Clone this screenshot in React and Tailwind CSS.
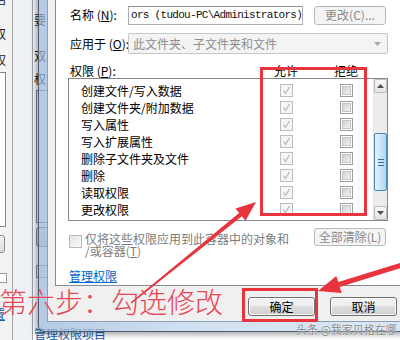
import React from "react";

const rows = [
  "创建文件/写入数据",
  "创建文件夹/附加数据",
  "写入属性",
  "写入扩展属性",
  "删除子文件夹及文件",
  "删除",
  "读取权限",
  "更改权限",
  "取得所有权",
];

function CheckedBox() {
  return (
    <div className="w-[13px] h-[13px] shrink-0 border border-[#bdbdbd] bg-[#f6f6f6] flex items-center justify-center">
      <svg width="11" height="11" viewBox="0 0 11 11">
        <path d="M2.5 5.5 L4.5 8.5 L8.5 2" fill="none" stroke="#b4b4b4" strokeWidth="1.2" />
      </svg>
    </div>
  );
}

function EmptyBox() {
  return (
    <div className="w-[13px] h-[13px] shrink-0 border border-[#9d9d9d] bg-white p-[1px]">
      <div className="w-full h-full border border-[#c4c4c4] bg-[linear-gradient(135deg,#d2d2d2,#f2f2f2)]" />
    </div>
  );
}

function WinButton({ children, disabled, className = "" }) {
  if (disabled) {
    return (
      <div
        className={`flex items-center justify-center border border-[#b5b9bd] rounded-[3px] bg-[#f4f4f4] text-[#8a8a8a] leading-none ${className}`}
      >
        {children}
      </div>
    );
  }
  return (
    <div
      className={`flex items-center justify-center border border-[#707070] rounded-[3px] bg-[linear-gradient(#f3f3f3,#ececec_50%,#dedede_50%,#d0d0d0)] shadow-[inset_0_0_0_1px_rgba(255,255,255,0.8)] text-black leading-none ${className}`}
    >
      {children}
    </div>
  );
}

function ScrollBar() {
  return (
    <div className="w-[14px] shrink-0 flex flex-col bg-[#ececec] border-l border-[#e2e2e2]">
      <div className="h-[14px] border border-[#bdbdbd] rounded-[2px] bg-[linear-gradient(#f7f7f7,#e4e4e4)] flex items-center justify-center">
        <svg width="7" height="4" viewBox="0 0 7 4">
          <path d="M0 4 L3.5 0 L7 4 Z" fill="#4d4d4d" />
        </svg>
      </div>
      <div className="flex-1 flex flex-col pt-[40px]">
        <div className="h-[58px] border border-[#4a87b8] rounded-[2px] bg-[linear-gradient(to_right,#e4f3fb,#c9e5f6_50%,#b0d6ef)] flex flex-col items-center justify-center gap-[2px]">
          <div className="w-[6px] h-[1px] bg-[#3f6f98]" />
          <div className="w-[6px] h-[1px] bg-[#3f6f98]" />
          <div className="w-[6px] h-[1px] bg-[#3f6f98]" />
        </div>
      </div>
      <div className="h-[14px] border border-[#bdbdbd] rounded-[2px] bg-[linear-gradient(#f7f7f7,#e4e4e4)] flex items-center justify-center">
        <svg width="7" height="4" viewBox="0 0 7 4">
          <path d="M0 0 L3.5 4 L7 0 Z" fill="#4d4d4d" />
        </svg>
      </div>
    </div>
  );
}

export default function App() {
  return (
    <div className="relative w-[400px] h-[340px] overflow-hidden bg-white font-['Noto_Sans_CJK_SC','Noto_Sans',sans-serif] text-[12px] text-black">
      {/* Background window A (far left) */}
      <div className="absolute left-[-60px] top-0 w-[73px] h-[340px] bg-[#f3f3f3] border-r border-[#a5a5a5] overflow-hidden flex flex-col">
        <span className="ml-[54px] mt-[-7px] leading-[12px] text-[#222]">话</span>
        <span className="ml-[54px] mt-[23px] leading-[12px] text-[#222]">双</span>
        <span className="ml-[54px] mt-[14px] leading-[12px] text-[#222]">权</span>
        <div className="ml-[10px] mt-[6px] w-[56px] h-[155px] bg-white border border-[#828790]" />
        <div className="ml-[10px] mt-[8px] w-[55px] h-[18px] border border-[#8a8a8a] rounded-[3px] bg-[linear-gradient(#f3f3f3,#dcdcdc)]" />
        <div className="ml-[57px] mt-[20px] w-[10px] h-[10px] border border-[#9a9a9a] bg-white" />
        <span className="ml-[53px] mt-[25px] leading-[12px] text-[#1a5fb4] underline">置</span>
      </div>

      {/* Background window B */}
      <div className="absolute left-[13px] top-0 w-[400px] h-[340px] flex bg-[#eef2f6]">
        <div className="w-[19px] shrink-0" />
        <div className="flex-1 bg-white border-l border-[#9aa1ab] flex flex-col pl-[1px]">
          <span className="mt-[14px] leading-[12px] text-[#222]">要</span>
          <span className="mt-[24px] leading-[12px] text-[#222]">双</span>
          <span className="mt-[11px] leading-[12px] text-[#222]">权</span>
          <div className="mt-[5px] ml-[2px] w-[60px] h-[133px] border border-[#828790] bg-white" />
          <div className="mt-[4px] ml-[2px] w-[60px] h-[20px] border border-[#8a8a8a] rounded-[3px] bg-[linear-gradient(#f3f3f3,#dcdcdc)]" />
          <div className="mt-[18px] ml-[2px] w-[13px] h-[13px] border border-[#9a9a9a] bg-[#f4f4f4]" />
          <span className="mt-[50px] leading-[12px] text-[#1a5fb4] underline whitespace-nowrap">管理权限项目</span>
        </div>
      </div>

      {/* Main dialog */}
      <div className="absolute left-[38px] top-[-20px] w-[380px] h-[352px] flex flex-col pl-[8px] pb-[9px] border-l border-b border-[#4a5d75] rounded-bl-[6px] bg-[linear-gradient(to_right,rgba(150,180,215,0.7),rgba(200,218,238,0.82)_40%,rgba(214,228,242,0.9))] shadow-[-2px_2px_6px_rgba(0,0,0,0.4)]">
        <div className="flex-1 flex flex-col bg-[#f0f0f0] border-l border-b border-[#8c9fb6] pl-[7px]">
          {/* tab page */}
          <div className="h-[306px] shrink-0 bg-white border-l border-b border-[#898c95] flex flex-col pt-[25px] pl-[13px]">
            {/* Row 1 */}
            <div className="flex items-center h-[20px]">
              <div className="w-[59px] shrink-0 pl-[1px] leading-[12px] whitespace-nowrap">
                名称 (<span className="underline">N</span>):
              </div>
              <div className="w-[175px] h-[19px] shrink-0 border border-[#abadb3] border-t-[#8e9199] bg-white flex items-center pl-[2px] overflow-hidden whitespace-nowrap font-['Liberation_Mono',monospace] text-[11px] tracking-[-0.7px] text-[#111]">
                ors (tudou-PC\Administrators)
              </div>
              <WinButton disabled className="ml-[11px] w-[72px] h-[19px] shrink-0">
                更改(C)...
              </WinButton>
            </div>
            {/* Row 2 */}
            <div className="flex items-center h-[21px] mt-[8px]">
              <div className="w-[59px] shrink-0 pl-[1px] leading-[12px] whitespace-nowrap">
                应用于 (<span className="underline">O</span>):
              </div>
              <div className="w-[260px] h-[21px] shrink-0 border border-[#c3c6ca] rounded-[2px] bg-[#f4f4f4] flex items-center pl-[4px] pr-[6px] text-[#8d8d8d] leading-none">
                <span className="flex-1 whitespace-nowrap">此文件夹、子文件夹和文件</span>
                <svg width="7" height="4" viewBox="0 0 7 4">
                  <path d="M0 0 L3.5 4 L7 0 Z" fill="#a8a8a8" />
                </svg>
              </div>
            </div>
            {/* Header row */}
            <div className="flex h-[13px] mt-[10px] leading-[13px]">
              <div className="w-[202px] shrink-0 pl-[1px] whitespace-nowrap">
                权限 (<span className="underline">P</span>):
              </div>
              <div className="w-[30px] shrink-0 text-center">允许</div>
              <div className="w-[30px] shrink-0 ml-[30px] text-center">拒绝</div>
            </div>
            {/* List */}
            <div className="mt-[1px] -ml-[1px] w-[320px] h-[143px] shrink-0 border border-[#828790] bg-white flex">
              <div className="flex-1 overflow-hidden pt-[3px]">
                {rows.map((r) => (
                  <div key={r} className="h-[17px] flex items-center">
                    <div className="w-[211px] shrink-0 pl-[12px] leading-[12px] whitespace-nowrap">{r}</div>
                    <CheckedBox />
                    <div className="ml-[47px]">
                      <EmptyBox />
                    </div>
                  </div>
                ))}
              </div>
              <ScrollBar />
            </div>
            {/* Apply only row */}
            <div className="flex items-start mt-[7px]">
              <div className="w-[245px] shrink-0 flex items-start pt-[5px]">
                <div className="mt-[2px] w-[13px] h-[13px] shrink-0 border border-[#b8b8b8] bg-[linear-gradient(135deg,#e4e4e4,#f8f8f8)]" />
                <div className="ml-[3px] leading-[12px] text-[#7c7c7c] whitespace-nowrap">
                  仅将这些权限应用到此容器中的对象和
                  <br />
                  /或容器(<span className="underline">T</span>)
                </div>
              </div>
              <WinButton disabled className="w-[72px] h-[18px] shrink-0">
                全部清除(L)
              </WinButton>
            </div>
            <div className="mt-[13px] leading-[12px] text-[#0066cc] underline whitespace-nowrap">管理权限</div>
          </div>
          {/* bottom buttons */}
          <div className="flex gap-[15px] pl-[193px] pt-[11px]">
            <WinButton className="w-[67px] h-[19px] shrink-0">确定</WinButton>
            <WinButton className="w-[67px] h-[19px] shrink-0">取消</WinButton>
          </div>
        </div>
      </div>

      {/* Annotations */}
      <div className="absolute left-[260px] top-[67px] w-[107px] h-[149px] border-[3px] border-[#e8353d]" />
      <div className="absolute left-[242px] top-[288px] w-[76px] h-[34px] border-[3px] border-[#e8353d]" />
      <svg className="absolute left-0 top-0 pointer-events-none" width="400" height="340" viewBox="0 0 400 340">
        <polygon
          points="256,202 245.5,220.8 241.9,216.3 131.5,303.6 130.5,302.4 239.1,212.9 235.5,208.4"
          fill="#e8353d"
        />
        <polygon
          points="318,291 341.7,293.1 339.7,286.9 402.7,267.4 401.3,262.6 338.3,282.1 336.3,275.9"
          fill="#e8353d"
        />
      </svg>
      <div className="absolute left-[-1px] top-[285px] text-[28px] leading-[32px] text-[#ea4656] whitespace-nowrap font-light">
        第六步：勾选修改
      </div>
      <div className="absolute left-[296px] top-[323px] text-[11px] leading-[12px] text-[#8a8a8a] whitespace-nowrap [text-shadow:0_0_2px_#fff]">
        头条 @我家贝格在哪
      </div>
    </div>
  );
}
